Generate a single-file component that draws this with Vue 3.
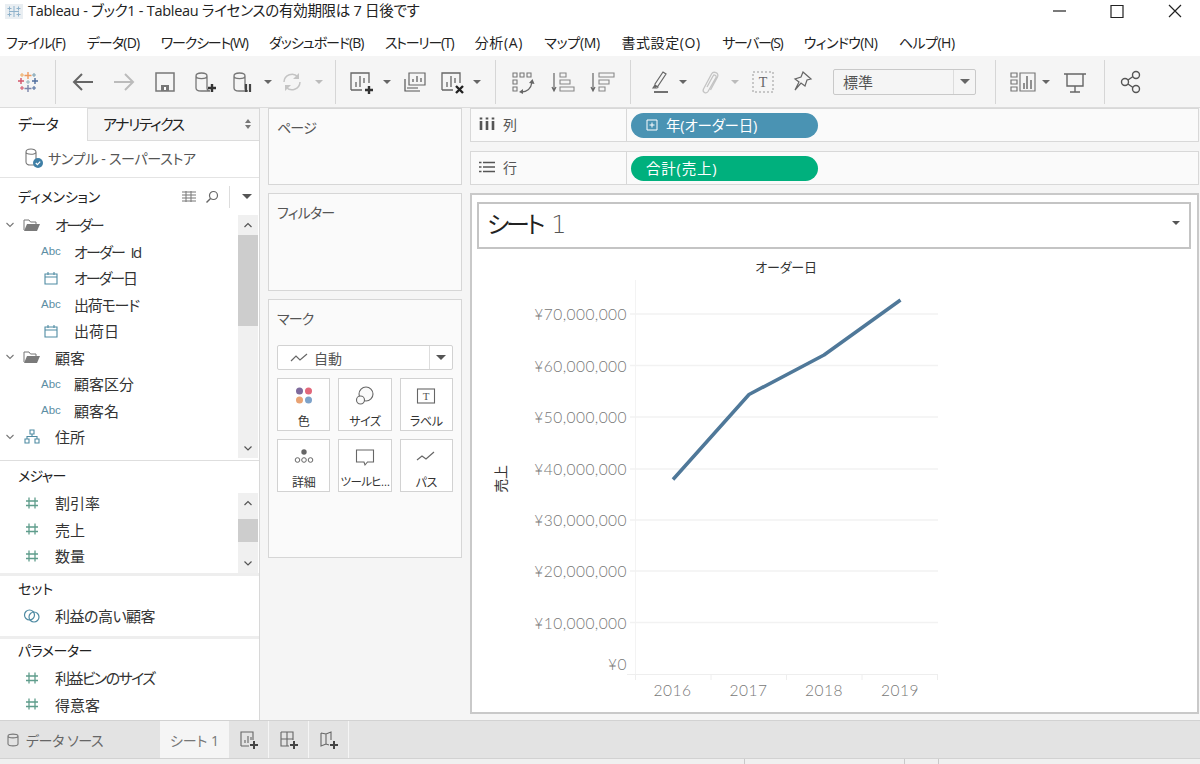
<script setup>
// ls = letter-spacing in px, the kana run much tighter than the kanji
const menus = [
  { t: 'ファイル(F)', ls: -0.7 },
  { t: 'データ(D)', ls: -0.8 },
  { t: 'ワークシート(W)', ls: -1.2 },
  { t: 'ダッシュボード(B)', ls: -1 },
  { t: 'ストーリー(T)', ls: -1.25 },
  { t: '分析(A)', ls: 0.6 },
  { t: 'マップ(M)', ls: -0.3 },
  { t: '書式設定(O)', ls: 0.6 },
  { t: 'サーバー(S)', ls: -1.4 },
  { t: 'ウィンドウ(N)', ls: -0.6 },
  { t: 'ヘルプ(H)', ls: -0.5 }
]

const plus = (x, y) => `<path d="M${x - 4} ${y}h8M${x} ${y - 4}v8" stroke="#333" stroke-width="2.4" fill="none"/>`
const cyl = 'M6 9c0-4 11-4 11 0v12c0 2 1 3 3 3h-9c-3 0-5-1-5-3zM6 9c0 3.500 11 3.500 11 0'
const caret = '<path d="M11 13h8l-4 4z" fill="COL"/>'
const chart = 'M5 23V6h18v10M5 23h11M10 20v-5M14 20V9M18 16v-5'

// toolbar, left to right: width of the slot and what is drawn in it
const tools = [
  { w: 40, svg: '<path d="M25 15H6M14 7l-8 8 8 8" stroke="#666" stroke-width="2" fill="none"/>' },
  { w: 41, svg: '<path d="M5 15h19M16 7l8 8-8 8" stroke="#bbb" stroke-width="2" fill="none"/>' },
  { w: 41, svg: '<path d="M6 6h18v18H6z" stroke="#777" stroke-width="1.500" fill="none"/><path d="M11 24v-6h8v6z" fill="#777"/><path d="M14 20h2v3h-2z" fill="#fff"/>' },
  { w: 39, svg: `<path d="${cyl}" stroke="#777" stroke-width="1.300" fill="none"/>${plus(22, 21)}` },
  { w: 38, svg: `<path d="${cyl}" stroke="#777" stroke-width="1.300" fill="none"/><path d="M18 17v8M22 17v8" stroke="#444" stroke-width="2.200"/>` },
  { w: 12, svg: caret.replace('COL', '#666') },
  { w: 36, svg: '<path d="M7 15a8 8 0 0 1 14-5M23 15a8 8 0 0 1-14 5" stroke="#c4c4c4" stroke-width="1.500" fill="none"/><path d="M22 6v6h-6zM8 24v-6h6z" fill="#c4c4c4"/>' },
  { w: 18, svg: caret.replace('COL', '#bbb') },
  { sep: 1, w: 14 },
  { w: 38, svg: `<path d="${chart}" stroke="#666" stroke-width="1.300" fill="none"/>${plus(23, 23)}` },
  { w: 14, svg: caret.replace('COL', '#666') },
  { w: 42, svg: '<path d="M9 6h16v12H9z" stroke="#666" stroke-width="1.200" fill="none"/><path d="M5 12v12h15M13 15v-3M17 15V9M21 15v-4M7 21h11" stroke="#555" stroke-width="1.200" fill="none"/>' },
  { w: 32, svg: `<path d="${chart}" stroke="#666" stroke-width="1.300" fill="none"/><path d="M19 19l7 7M26 19l-7 7" stroke="#222" stroke-width="2.400"/>` },
  { w: 18, svg: caret.replace('COL', '#666') },
  { sep: 1, w: 18 },
  { w: 38, svg: '<path d="M5 6h4v4H5zM12 6h4v4h-4zM19 6h4v4h-4zM5 13h4v4H5zM5 20h4v4H5z" stroke="#777" stroke-width="1.100" fill="none"/><path d="M13 25c6 0 10-3 11-10" stroke="#666" stroke-width="1.300" fill="none"/><path d="M21 16l3.500-4 2 5zM15 22l-4 3 4 2z" fill="#666"/>' },
  { w: 40, svg: '<path d="M7 6v17M5 20l2 4 2-4" stroke="#666" stroke-width="1.200" fill="none"/><path d="M13 6h6v4h-6zM13 13h10v4H13zM13 20h14v4H13z" stroke="#888" stroke-width="1.100" fill="none"/>' },
  { w: 40, svg: '<path d="M6 6v17M4 20l2 4 2-4" stroke="#666" stroke-width="1.200" fill="none"/><path d="M12 6h15v4H12zM12 13h10v4H12zM12 20h6v4h-6z" stroke="#888" stroke-width="1.100" fill="none"/>' },
  { sep: 1, w: 17 },
  { w: 37, svg: '<path d="M12 17l8-12 3 2-8 12-3 1zM10 21l2-3 3 2-1 1z" stroke="#666" stroke-width="1.200" fill="none"/><path d="M11 25h14" stroke="#444" stroke-width="1.500"/>' },
  { w: 14, svg: caret.replace('COL', '#666') },
  { w: 38, svg: '<path d="M13 20l6-11c1-2 4-.5 3 1.500l-8 14c-2 3-6 .5-4.500-2.500l8-15c2-3.500 8-1 6 3l-7 13" stroke="#c4c4c4" stroke-width="1.300" fill="none"/>' },
  { w: 14, svg: caret.replace('COL', '#bbb') },
  { w: 42, svg: '<rect x="5" y="5" width="20" height="20" stroke="#999" stroke-width="1" stroke-dasharray="2 2" fill="none"/><text x="15" y="20" text-anchor="middle" font-family="Liberation Serif, serif" font-size="14" fill="#666">T</text>' },
  { w: 36, svg: '<path d="M16 5l8 7-4 1-2 6-4-3-6 7 4-8-4-3 6-2z" stroke="#666" stroke-width="1.200" fill="none"/>' }
]

const tools2 = [
  { w: 36, svg: '<path d="M3 6h6v4H3zM3 13h6v4H3zM3 20h6v4H3zM12 6h15v18H12z" stroke="#777" stroke-width="1.200" fill="none"/><path d="M16 22v-6M19 22V9M23 22v-9" stroke="#666" stroke-width="1.400"/>' },
  { w: 10, svg: caret.replace('COL', '#666') },
  { w: 48, svg: '<path d="M4 7h22M7 7v12h16V7M15 19v6M10 25h10" stroke="#666" stroke-width="1.400" fill="none"/>' }
]

const rows = [
  { kind: 'folder', label: 'オーダー', ls: -2.5 },
  { kind: 'abc', label: 'オーダー Id', ls: -1.7 },
  { kind: 'date', label: 'オーダー日', ls: -2 },
  { kind: 'abc', label: '出荷モード', ls: -1.2 },
  { kind: 'date', label: '出荷日', ls: 0 },
  { kind: 'folder', label: '顧客', ls: 0 },
  { kind: 'abc', label: '顧客区分', ls: 0 },
  { kind: 'abc', label: '顧客名', ls: 0 },
  { kind: 'tree', label: '住所', ls: 0 }
]
const measures = ['割引率', '売上', '数量']
const params = [
  { label: '利益ビンのサイズ', ls: -1.6 },
  { label: '得意客', ls: 0 }
]

const ticks = [
  { y: 314, label: '¥70,000,000' },
  { y: 365.5, label: '¥60,000,000' },
  { y: 417, label: '¥50,000,000' },
  { y: 469, label: '¥40,000,000' },
  { y: 520, label: '¥30,000,000' },
  { y: 571, label: '¥20,000,000' },
  { y: 622.5, label: '¥10,000,000' }
]
const years = [
  { x: 672.5, label: '2016' },
  { x: 748.5, label: '2017' },
  { x: 824, label: '2018' },
  { x: 900, label: '2019' }
]
</script>

<template>
  <div class="app">
    <div class="titlebar">
      <svg class="app-icon" width="18" height="15" viewBox="0 0 18 15">
        <rect width="18" height="15" fill="#e9eef2" />
        <path d="M9 2v11M4 7.500h10M4.500 2.500v4M2.500 4.500h4M13.500 2.500v4M11.500 4.500h4M4.500 8.500v4M2.500 10.500h4M13.500 8.500v4M11.500 10.500h4" stroke="#8fb2cb" stroke-width="1" fill="none" />
      </svg>
      <span class="title-text">Tableau - ブック1 - Tableau ライセンスの有効期限は 7 日後です</span>
      <div class="win-btns">
        <svg width="58" height="20" viewBox="0 0 58 20"><path d="M23 11h13" stroke="#222" stroke-width="1.200" /></svg>
        <svg width="58" height="20" viewBox="0 0 58 20"><path d="M23 5.500h12v12H23z" stroke="#222" stroke-width="1.200" fill="none" /></svg>
        <svg width="58" height="20" viewBox="0 0 58 20"><path d="M23 5l12 12M35 5L23 17" stroke="#222" stroke-width="1.200" /></svg>
      </div>
    </div>

    <div class="menubar">
      <span v-for="m in menus" :key="m.t" class="menu-item" :style="{ letterSpacing: m.ls + 'px' }">{{ m.t }}</span>
    </div>

    <div class="toolbar">
      <div class="logo-slot">
        <svg width="26" height="26" viewBox="0 0 26 26">
          <path d="M13 3v7M9.500 6.500h7" stroke="#ee9a5e" stroke-width="1.400" />
          <path d="M13 16v7M9.500 19.500h7" stroke="#7d86ab" stroke-width="1.400" />
          <path d="M6 9v6M3 12h6" stroke="#d4566a" stroke-width="1.400" />
          <path d="M20 9v6M17 12h6" stroke="#4f6d9d" stroke-width="1.400" />
          <path d="M7 4v4M5 6h4" stroke="#f0ad66" stroke-width="1.100" />
          <path d="M19 4v4M17 6h4" stroke="#7fa3b3" stroke-width="1.100" />
          <path d="M7 17v4M5 19h4" stroke="#d4566a" stroke-width="1.100" />
          <path d="M19 17v4M17 19h4" stroke="#4f6d9d" stroke-width="1.100" />
          <path d="M13 11v4M11 13h4" stroke="#8fb0ba" stroke-width="1" />
        </svg>
      </div>
      <div class="tsep"></div>
      <div class="tstart"></div>
      <template v-for="(t, i) in tools" :key="i">
        <div v-if="t.sep" class="sep-slot" :style="{ width: t.w + 'px' }"><div class="tsep"></div></div>
        <div v-else class="tool" :style="{ width: t.w + 'px' }">
          <svg width="30" height="30" viewBox="0 0 30 30" v-html="t.svg"></svg>
        </div>
      </template>
      <div class="std-select">
        <span class="std-label">標準</span>
        <span class="std-arrow"><i class="tri"></i></span>
      </div>
      <div class="sep-slot wide"><div class="tsep"></div></div>
      <div v-for="(t, i) in tools2" :key="'b' + i" class="tool" :style="{ width: t.w + 'px' }">
        <svg width="30" height="30" viewBox="0 0 30 30" v-html="t.svg"></svg>
      </div>
      <div class="sep-slot share-sep"><div class="tsep"></div></div>
      <div class="tool share">
        <svg width="30" height="30" viewBox="0 0 30 30">
          <circle cx="20" cy="8" r="3.500" stroke="#555" stroke-width="1.400" fill="none" />
          <circle cx="9" cy="15" r="3.500" stroke="#555" stroke-width="1.400" fill="none" />
          <circle cx="20" cy="22" r="3.500" stroke="#555" stroke-width="1.400" fill="none" />
          <path d="M12 13l5-3.500M12 17l5 3.500" stroke="#555" stroke-width="1.400" />
        </svg>
      </div>
    </div>

    <div class="workspace">
      <aside class="data-pane">
        <div class="pane-tabs">
          <div class="ptab active">データ</div>
          <div class="ptab other">
            <span class="analytics">アナリティクス</span>
            <svg width="8" height="12" viewBox="0 0 8 12"><path d="M4 1l3 4H1zM4 11L1 7h6z" fill="#777" /></svg>
          </div>
        </div>
        <div class="source-row">
          <svg width="22" height="22" viewBox="0 0 22 22">
            <path d="M3 5c0-4 10-4 10 0v11c0 1 .5 2 1 2H7c-2 0-4-1-4-3zM3 5c0 3 10 3 10 0" stroke="#777" stroke-width="1.100" fill="none" />
            <circle cx="15" cy="16" r="5" fill="#3f7fa6" />
            <path d="M12.800 16l1.600 1.600 2.800-3" stroke="#fff" stroke-width="1.200" fill="none" />
          </svg>
          <span>サンプル - スーパーストア</span>
        </div>
        <div class="dim-head">
          <span>ディメンション</span>
          <div class="dim-tools">
            <svg width="16" height="14" viewBox="0 0 16 14"><path d="M1 2h14M1 5h14M1 8h14M1 11h14M5 1v11M10 1v11" stroke="#777" stroke-width="1" /></svg>
            <svg width="14" height="14" viewBox="0 0 14 14"><circle cx="8.500" cy="5.500" r="4" stroke="#666" stroke-width="1.200" fill="none" /><path d="M5.500 8.500L1.500 12.500" stroke="#666" stroke-width="1.400" /></svg>
            <i class="dim-sep"></i>
            <i class="tri dark"></i>
          </div>
        </div>
        <div class="scroll-list dims">
          <div class="list-body">
            <div v-for="r in rows" :key="r.label" class="row" :class="{ field: r.kind === 'abc' || r.kind === 'date' }">
              <template v-if="r.kind === 'folder' || r.kind === 'tree'">
                <svg class="chev" width="10" height="8" viewBox="0 0 10 8"><path d="M1.500 2l3.500 3.500L8.500 2" stroke="#777" stroke-width="1.100" fill="none" /></svg>
                <svg v-if="r.kind === 'folder'" class="row-ic" width="18" height="14" viewBox="0 0 18 14">
                  <path d="M1 12V2h5l1.500 2H13v2" stroke="#777" stroke-width="1" fill="none" />
                  <path d="M1 13l3-7h13l-3 7z" fill="#7a7a7a" />
                </svg>
                <svg v-else class="row-ic" width="18" height="16" viewBox="0 0 18 16">
                  <path d="M7 1h4v4H7zM2 10h4v4H2zM12 10h4v4h-4zM4 10V7.500h10V10M9 5v2.500" stroke="#4f8ba3" stroke-width="1.100" fill="none" />
                </svg>
              </template>
              <span v-else-if="r.kind === 'abc'" class="abc">Abc</span>
              <svg v-else class="cal" width="14" height="14" viewBox="0 0 14 14">
                <path d="M1 3h12v10H1zM1 6h12M4 1v3M10 1v3" stroke="#4f8ba3" stroke-width="1.100" fill="none" />
              </svg>
              <span class="row-label" :style="{ letterSpacing: r.ls + 'px' }">{{ r.label }}</span>
            </div>
          </div>
          <div class="scrollbar">
            <svg class="sb-arrow" width="20" height="20" viewBox="0 0 20 20"><path d="M6.500 12l3.500-3.500 3.500 3.500" stroke="#555" stroke-width="1.200" fill="none" /></svg>
            <div class="thumb dim-thumb"></div>
            <svg class="sb-arrow end" width="20" height="20" viewBox="0 0 20 20"><path d="M6.500 8.500l3.500 3.500 3.500-3.500" stroke="#555" stroke-width="1.200" fill="none" /></svg>
          </div>
        </div>

        <div class="group-head measures-head">メジャー</div>
        <div class="scroll-list meas">
          <div class="list-body">
            <div v-for="m in measures" :key="m" class="row">
              <svg class="hash" width="18" height="14" viewBox="0 0 18 14"><path d="M6 1.500v11M12 1.500v11M3 5h12M3 9.500h12" stroke="#5f9d8c" stroke-width="1.300" /></svg>
              <span class="row-label">{{ m }}</span>
            </div>
          </div>
          <div class="scrollbar">
            <svg class="sb-arrow" width="20" height="20" viewBox="0 0 20 20"><path d="M6.500 12l3.500-3.500 3.500 3.500" stroke="#555" stroke-width="1.200" fill="none" /></svg>
            <div class="thumb meas-thumb"></div>
            <svg class="sb-arrow end" width="20" height="20" viewBox="0 0 20 20"><path d="M6.500 8.500l3.500 3.500 3.500-3.500" stroke="#555" stroke-width="1.200" fill="none" /></svg>
          </div>
        </div>

        <div class="group sets">
          <div class="group-head">セット</div>
          <div class="row">
            <svg class="row-ic" width="18" height="16" viewBox="0 0 18 16">
              <circle cx="6.500" cy="7" r="5" stroke="#4f8ba3" stroke-width="1.200" fill="none" />
              <circle cx="11" cy="9" r="5" stroke="#4f8ba3" stroke-width="1.200" fill="none" />
            </svg>
            <span class="row-label tight">利益の高い顧客</span>
          </div>
        </div>
        <div class="group params">
          <div class="group-head">パラメーター</div>
          <div v-for="p in params" :key="p.label" class="row">
            <svg class="hash" width="18" height="14" viewBox="0 0 18 14"><path d="M6 1.500v11M12 1.500v11M3 5h12M3 9.500h12" stroke="#5f9d8c" stroke-width="1.300" /></svg>
            <span class="row-label" :style="{ letterSpacing: p.ls + 'px' }">{{ p.label }}</span>
          </div>
        </div>
      </aside>

      <section class="cards">
        <div class="card pages"><span class="card-title">ページ</span></div>
        <div class="card filters"><span class="card-title">フィルター</span></div>
        <div class="card marks">
          <div class="marks-title">マーク</div>
          <div class="mark-select">
            <svg width="18" height="10" viewBox="0 0 18 10"><path d="M1 8l5-5 4 4 7-6" stroke="#666" stroke-width="1.200" fill="none" /></svg>
            <span>自動</span>
            <span class="mark-arrow"><i class="tri dark"></i></span>
          </div>
          <div class="mark-grid">
            <div class="mark-btn">
              <svg width="20" height="20" viewBox="0 0 20 20">
                <circle cx="5.500" cy="5" r="3.500" fill="#7e6a9c" /><circle cx="14.500" cy="5" r="3.500" fill="#e2677a" />
                <circle cx="5.500" cy="14" r="3.500" fill="#e8a273" /><circle cx="14.500" cy="14" r="3.500" fill="#7da2c9" />
              </svg>
              <span>色</span>
            </div>
            <div class="mark-btn">
              <svg width="20" height="20" viewBox="0 0 20 20">
                <circle cx="11" cy="8" r="7" stroke="#666" stroke-width="1.100" fill="#fafafa" />
                <circle cx="5.500" cy="14" r="4" stroke="#666" stroke-width="1.100" fill="#fafafa" />
              </svg>
              <span>サイズ</span>
            </div>
            <div class="mark-btn">
              <svg width="20" height="20" viewBox="0 0 20 20">
                <rect x="1.500" y="3" width="17" height="14" stroke="#666" stroke-width="1.100" fill="none" />
                <text x="10" y="14" text-anchor="middle" font-family="Liberation Serif, serif" font-size="11" fill="#555">T</text>
              </svg>
              <span>ラベル</span>
            </div>
            <div class="mark-btn">
              <svg width="20" height="20" viewBox="0 0 20 20">
                <circle cx="10" cy="5" r="2.700" fill="#666" />
                <circle cx="3.500" cy="13" r="2.300" stroke="#666" fill="none" /><circle cx="10" cy="13" r="2.300" stroke="#666" fill="none" /><circle cx="16.500" cy="13" r="2.300" stroke="#666" fill="none" />
              </svg>
              <span>詳細</span>
            </div>
            <div class="mark-btn">
              <svg width="20" height="20" viewBox="0 0 20 20">
                <path d="M1.500 3h17v12h-6l-2.500 3-1-3h-7.500z" stroke="#666" stroke-width="1.100" fill="none" />
              </svg>
              <span class="tooltip-label">ツールヒ…</span>
            </div>
            <div class="mark-btn">
              <svg width="20" height="20" viewBox="0 0 20 20"><path d="M1 13l5-4 4 3 8-7" stroke="#666" stroke-width="1.200" fill="none" /></svg>
              <span>パス</span>
            </div>
          </div>
        </div>
      </section>

      <main class="view">
        <div class="shelf">
          <div class="shelf-name">
            <svg width="16" height="14" viewBox="0 0 16 14"><path d="M2 4v9M8 4v9M14 4v9M2 .5v2M8 .5v2M14 .5v2" stroke="#555" stroke-width="2.600" /></svg>
            <span>列</span>
          </div>
          <div class="pill blue">
            <svg width="12" height="12" viewBox="0 0 12 12"><path d="M1 1h10v10H1zM3.500 6h5M6 3.500v5" stroke="#fff" stroke-width="1" fill="none" /></svg>
            <span>年(オーダー日)</span>
          </div>
        </div>
        <div class="shelf">
          <div class="shelf-name">
            <svg width="16" height="14" viewBox="0 0 16 14"><path d="M0 2.500h2.500M0 7h2.500M0 11.500h2.500M4 2.500h12M4 7h12M4 11.500h12" stroke="#555" stroke-width="1.700" /></svg>
            <span>行</span>
          </div>
          <div class="pill green"><span>合計(売上)</span></div>
        </div>

        <div class="sheet">
          <div class="sheet-title">
            <span class="sheet-name">シート<em>1</em></span>
            <i class="tri dark small"></i>
          </div>
          <svg class="chart" viewBox="472 249 725 463" width="725" height="463">
            <text x="786" y="272" text-anchor="middle" class="axis-title">オーダー日</text>
            <path d="M635.500 280V674" stroke="#f3f3f3" />
            <path d="M627 674.500H938M635.500 674v6M711 674v6M786.500 674v6M862 674v6M937.500 674v6" stroke="#eeeeee" />
            <path v-for="t in ticks" :key="t.y" :d="`M630 ${t.y}H938`" stroke="#f2f2f2" stroke-width="1.500" />
            <text v-for="t in ticks" :key="t.label" x="627" :y="t.y + 6" text-anchor="end" class="tick">{{ t.label }}</text>
            <text x="627" y="670" text-anchor="end" class="tick">¥0</text>
            <text v-for="y in years" :key="y.label" :x="y.x" y="696" text-anchor="middle" class="tick">{{ y.label }}</text>
            <text transform="translate(506 479) rotate(-90)" text-anchor="middle" class="axis-title big">売上</text>
            <polyline points="673,479.500 749,394.500 824,355 900.500,300" fill="none" stroke="#4f7899" stroke-width="3.500" stroke-linejoin="round" />
          </svg>
        </div>
      </main>
    </div>

    <div class="tabbar">
      <div class="source-tab">
        <svg width="12" height="14" viewBox="0 0 12 14"><path d="M1 3c0-2.500 10-2.500 10 0v8c0 2.500-10 2.500-10 0zM1 3c0 2.500 10 2.500 10 0" stroke="#777" stroke-width="1.100" fill="none" /></svg>
        <span>データ ソース</span>
      </div>
      <div class="sheet-tab">シート 1</div>
      <div class="add-tab">
        <svg width="22" height="22" viewBox="0 0 22 22"><path d="M3 17V3h12v8M3 17h8M7 14v-3M10 14V7M13 11V8" stroke="#666" stroke-width="1.100" fill="none" /><path d="M16 12v8M12 16h8" stroke="#444" stroke-width="2" /></svg>
      </div>
      <div class="add-tab">
        <svg width="22" height="22" viewBox="0 0 22 22"><path d="M3 3h12v8M3 3v14h8M3 10h12M9 3v14" stroke="#666" stroke-width="1.100" fill="none" /><path d="M16 12v8M12 16h8" stroke="#444" stroke-width="2" /></svg>
      </div>
      <div class="add-tab">
        <svg width="22" height="22" viewBox="0 0 22 22"><path d="M3 4l5 1 5-2v8M3 4v13l5-2 3 1M8 5v10" stroke="#666" stroke-width="1.100" fill="none" /><path d="M16 12v8M12 16h8" stroke="#444" stroke-width="2" /></svg>
      </div>
    </div>
    <div class="statusbar">
      <i class="st st1"></i><i class="st st2"></i><i class="st st3"></i>
    </div>
  </div>
</template>

<style scoped>
.app {
  width: 1200px;
  height: 764px;
  display: flex;
  flex-direction: column;
  overflow: hidden;
  background: #f5f5f5;
  color: #333;
  font-family: "Open Sans", "Noto Sans CJK JP", sans-serif;
  font-feature-settings: "palt" 1;
  font-size: 14px;
}

.titlebar {
  height: 28px;
  flex: none;
  display: flex;
  align-items: center;
  padding: 0 0 10px 5px;
  box-sizing: border-box;
  background: #fff;
  font-size: 14.5px;
  letter-spacing: -0.28px;
  color: #222;
}

.app-icon {
  margin: 5px 5px 0 0;
}

.win-btns {
  margin-left: auto;
  margin-top: 2px;
  display: flex;
  margin-right: -4px;
}

.menubar {
  height: 28px;
  flex: none;
  display: flex;
  align-items: center;
  gap: 21.500px;
  padding-left: 6px;
  background: #fff;
  color: #222;
}

.toolbar {
  height: 51px;
  flex: none;
  display: flex;
  align-items: center;
  background: #f5f5f5;
  border-bottom: 1px solid #dcdcdc;
  box-sizing: content-box;
}

.logo-slot {
  width: 55px;
  display: flex;
  justify-content: center;
}

.tstart {
  width: 7px;
}

.tsep {
  width: 1px;
  height: 44px;
  background: #d6d6d6;
}

.sep-slot {
  display: flex;
  justify-content: center;
  flex: none;
}

.sep-slot.wide {
  width: 29px;
  justify-content: flex-start;
  padding-left: 19px;
  box-sizing: border-box;
}

.sep-slot.share-sep {
  width: 11px;
}

.tool {
  display: flex;
  justify-content: center;
  flex: none;
}

.tool svg {
  flex: none;
}

.tool.share {
  width: 42px;
}

.std-select {
  width: 143px;
  height: 26px;
  margin-left: 13px;
  flex: none;
  display: flex;
  align-items: center;
  justify-content: space-between;
  box-sizing: border-box;
  border: 1px solid #c9c9c9;
  border-radius: 2px;
  padding-left: 9px;
  font-size: 15px;
  color: #555;
}

.std-arrow {
  width: 21px;
  height: 100%;
  display: flex;
  align-items: center;
  justify-content: center;
  border-left: 1px solid #dcdcdc;
}

.tri {
  width: 0;
  height: 0;
  border-left: 5px solid transparent;
  border-right: 5px solid transparent;
  border-top: 5px solid #666;
}

.tri.dark {
  border-top-color: #555;
}

.tri.small {
  border-left-width: 4px;
  border-right-width: 4px;
  border-top-width: 4px;
}

.workspace {
  flex: 1;
  min-height: 0;
  display: flex;
}

.data-pane {
  width: 260px;
  flex: none;
  box-sizing: border-box;
  background: #fff;
  border-right: 1px solid #d8d8d8;
  display: flex;
  flex-direction: column;
}

.pane-tabs {
  height: 33px;
  flex: none;
  display: flex;
  font-size: 15px;
  color: #222;
}

.ptab {
  display: flex;
  align-items: center;
  padding-bottom: 2px;
  box-sizing: border-box;
}

.ptab.active {
  width: 87px;
  padding-left: 18px;
  letter-spacing: -0.6px;
}

.ptab.other {
  flex: 1;
  padding: 0 7px 2px 15px;
  justify-content: space-between;
  background: #f5f5f5;
  border: 1px solid #dcdcdc;
  border-right: none;
}

.analytics {
  letter-spacing: -1.5px;
}

.source-row {
  height: 37px;
  flex: none;
  display: flex;
  align-items: center;
  gap: 3px;
  padding: 0 0 3px 23px;
  box-sizing: border-box;
  border-bottom: 1px solid #e4e4e4;
  color: #555;
  letter-spacing: -0.3px;
}

.dim-head {
  height: 37px;
  flex: none;
  display: flex;
  align-items: center;
  justify-content: space-between;
  padding: 0 7px 2px 18px;
  box-sizing: border-box;
  color: #222;
  letter-spacing: -0.2px;
}

.dim-tools {
  display: flex;
  align-items: center;
  gap: 8px;
  margin-top: 2px;
}

.dim-sep {
  width: 1px;
  height: 22px;
  background: #ddd;
  margin: 0 4px 0 2px;
}

.scroll-list {
  display: flex;
  flex: none;
  overflow: hidden;
}

.scroll-list.dims {
  height: 245px;
  border-bottom: 1px solid #dedede;
  box-sizing: content-box;
}

.scroll-list.meas {
  height: 80px;
  border-bottom: 3px solid #eeeeee;
}

.list-body {
  flex: 1;
  margin-top: -3.500px;
}

.scrollbar {
  width: 20px;
  flex: none;
  display: flex;
  flex-direction: column;
  background: #f0f0f0;
  margin-right: 1px;
}

.dims .scrollbar {
  height: 243px;
}

.sb-arrow {
  flex: none;
}

.sb-arrow.end {
  margin-top: auto;
}

.thumb {
  background: #cdcdcd;
  flex: none;
}

.dim-thumb {
  height: 91px;
}

.meas-thumb {
  height: 23px;
  margin-top: 6px;
}

.row {
  height: 26.500px;
  display: flex;
  align-items: center;
  padding-left: 23px;
  position: relative;
  color: #333;
  font-size: 15px;
  white-space: nowrap;
}

.row.field {
  padding-left: 41px;
}

.chev {
  position: absolute;
  left: 5px;
  top: 9px;
}

.row-ic {
  width: 18px;
  flex: none;
}

.row-label {
  margin-left: 14px;
  word-spacing: 4px;
}

.row-label.tight {
  letter-spacing: -0.5px;
}

.field .row-label {
  position: absolute;
  left: 60px;
}

.abc {
  width: 20px;
  font-family: "Liberation Sans", sans-serif;
  font-size: 11.500px;
  color: #5c8ea3;
}

.cal {
  margin-left: 3px;
}

.hash {
  flex: none;
}

.group-head {
  color: #222;
  padding: 2px 0 0 18px;
  flex: none;
  box-sizing: border-box;
}

.measures-head {
  height: 32px;
  padding-top: 4px;
  letter-spacing: -0.7px;
}

.group {
  flex: none;
}

.sets {
  padding-bottom: 6.500px;
  border-bottom: 3px solid #eeeeee;
}

.sets .group-head {
  height: 27px;
}

.params .group-head {
  height: 26px;
  padding-top: 1px;
  letter-spacing: -0.5px;
}

.sets .row,
.params .row {
  top: -0.500px;
}

.cards {
  width: 194px;
  margin: 0 8px;
  flex: none;
  display: flex;
  flex-direction: column;
  gap: 8px;
}

.card {
  background: #fafafa;
  border: 1px solid #d6d6d6;
  box-sizing: border-box;
  padding: 8px;
  color: #555;
}

.card-title {
  letter-spacing: -0.8px;
}

.card.pages {
  height: 77px;
}

.card.filters {
  height: 98px;
}

.card.marks {
  height: 259px;
}

.marks-title {
  height: 37px;
  letter-spacing: -0.8px;
}

.mark-select {
  height: 25px;
  display: flex;
  align-items: center;
  gap: 6px;
  padding-left: 12px;
  box-sizing: border-box;
  border: 1px solid #d2d2d2;
  border-radius: 2px;
  background: #fff;
  color: #555;
}

.mark-arrow {
  margin-left: auto;
  width: 22px;
  height: 100%;
  display: flex;
  align-items: center;
  justify-content: center;
  border-left: 1px solid #ddd;
}

.mark-grid {
  margin-top: 8px;
  display: grid;
  grid-template-columns: repeat(3, minmax(0, 1fr));
  grid-auto-rows: 53px;
  gap: 8px;
}

.mark-btn {
  background: #fff;
  border: 1px solid #d2d2d2;
  box-sizing: border-box;
  display: flex;
  flex-direction: column;
  align-items: center;
  padding-top: 7px;
  gap: 6px;
  font-size: 12px;
  color: #333;
  white-space: nowrap;
  letter-spacing: -0.4px;
}

.tooltip-label {
  font-size: 11.500px;
  letter-spacing: -0.6px;
}

.view {
  flex: 1;
  min-width: 0;
  margin-right: 1px;
  display: flex;
  flex-direction: column;
}

.shelf {
  height: 34px;
  flex: none;
  margin-bottom: 9px;
  display: flex;
  align-items: center;
  background: #fafafa;
  border: 1px solid #d8d8d8;
  box-sizing: border-box;
}

.shelf-name {
  width: 156px;
  height: 100%;
  flex: none;
  display: flex;
  align-items: center;
  gap: 8px;
  padding: 0 0 2px 8px;
  box-sizing: border-box;
  border-right: 1px solid #d8d8d8;
  color: #555;
}

.pill {
  width: 187px;
  height: 25px;
  margin-left: 4px;
  border-radius: 13px;
  display: flex;
  align-items: center;
  gap: 8px;
  padding: 0 0 1px 15px;
  box-sizing: border-box;
  color: #fff;
  font-size: 14.500px;
  letter-spacing: -0.2px;
}

.pill.blue {
  background: #4a93b3;
}

.pill.green {
  background: #00b07d;
  letter-spacing: 0.8px;
}

.sheet {
  width: 729px;
  height: 521px;
  margin-top: -1px;
  flex: none;
  background: #fff;
  border: 2px solid #c9c9c9;
  box-sizing: border-box;
  display: flex;
  flex-direction: column;
}

.sheet-title {
  height: 47px;
  flex: none;
  margin: 7px 6px 0 5px;
  border: 2px solid #c4c4c4;
  box-sizing: border-box;
  display: flex;
  align-items: center;
  justify-content: space-between;
  padding: 0 9px 6px 8px;
  font-size: 24px;
  color: #222;
}

.sheet-name {
  letter-spacing: -3px;
}

.sheet-title em {
  font-style: normal;
  font-family: "DejaVu Sans", sans-serif;
  font-weight: 200;
  font-size: 24px;
  margin-left: 9px;
  color: #555;
}

.chart {
  display: block;
  flex: none;
}

.tick {
  font-family: Lato, "Open Sans", sans-serif;
  font-size: 15.500px;
  font-weight: 300;
  letter-spacing: 0.45px;
  fill: #777;
}

.axis-title {
  font-size: 13px;
  letter-spacing: -0.2px;
  fill: #333;
}

.axis-title.big {
  font-size: 14px;
}

.tabbar {
  height: 37px;
  flex: none;
  display: flex;
  background: #e3e3e3;
  border-top: 1px solid #d2d2d2;
  box-sizing: content-box;
  margin-top: -1px;
}

.source-tab {
  width: 160px;
  display: flex;
  align-items: center;
  gap: 7px;
  padding-left: 7px;
  box-sizing: border-box;
  color: #666;
  letter-spacing: -0.4px;
}

.sheet-tab {
  width: 69px;
  display: flex;
  align-items: center;
  justify-content: center;
  background: #f5f5f5;
  color: #777;
}

.add-tab {
  width: 40px;
  display: flex;
  align-items: center;
  justify-content: center;
  box-sizing: border-box;
  border-right: 1px solid #f5f5f5;
}

.statusbar {
  height: 5px;
  flex: none;
  background: #f0f0f0;
  border-top: 1px solid #d2d2d2;
  display: flex;
}

.st {
  width: 1px;
  background: #c9c9c9;
}

.st1 {
  margin-left: 744px;
}

.st2 {
  margin-left: 159px;
}

.st3 {
  margin-left: 33px;
}
</style>

<style>
html, body {
  margin: 0;
  overflow: hidden;
  background: #fff;
}
</style>
